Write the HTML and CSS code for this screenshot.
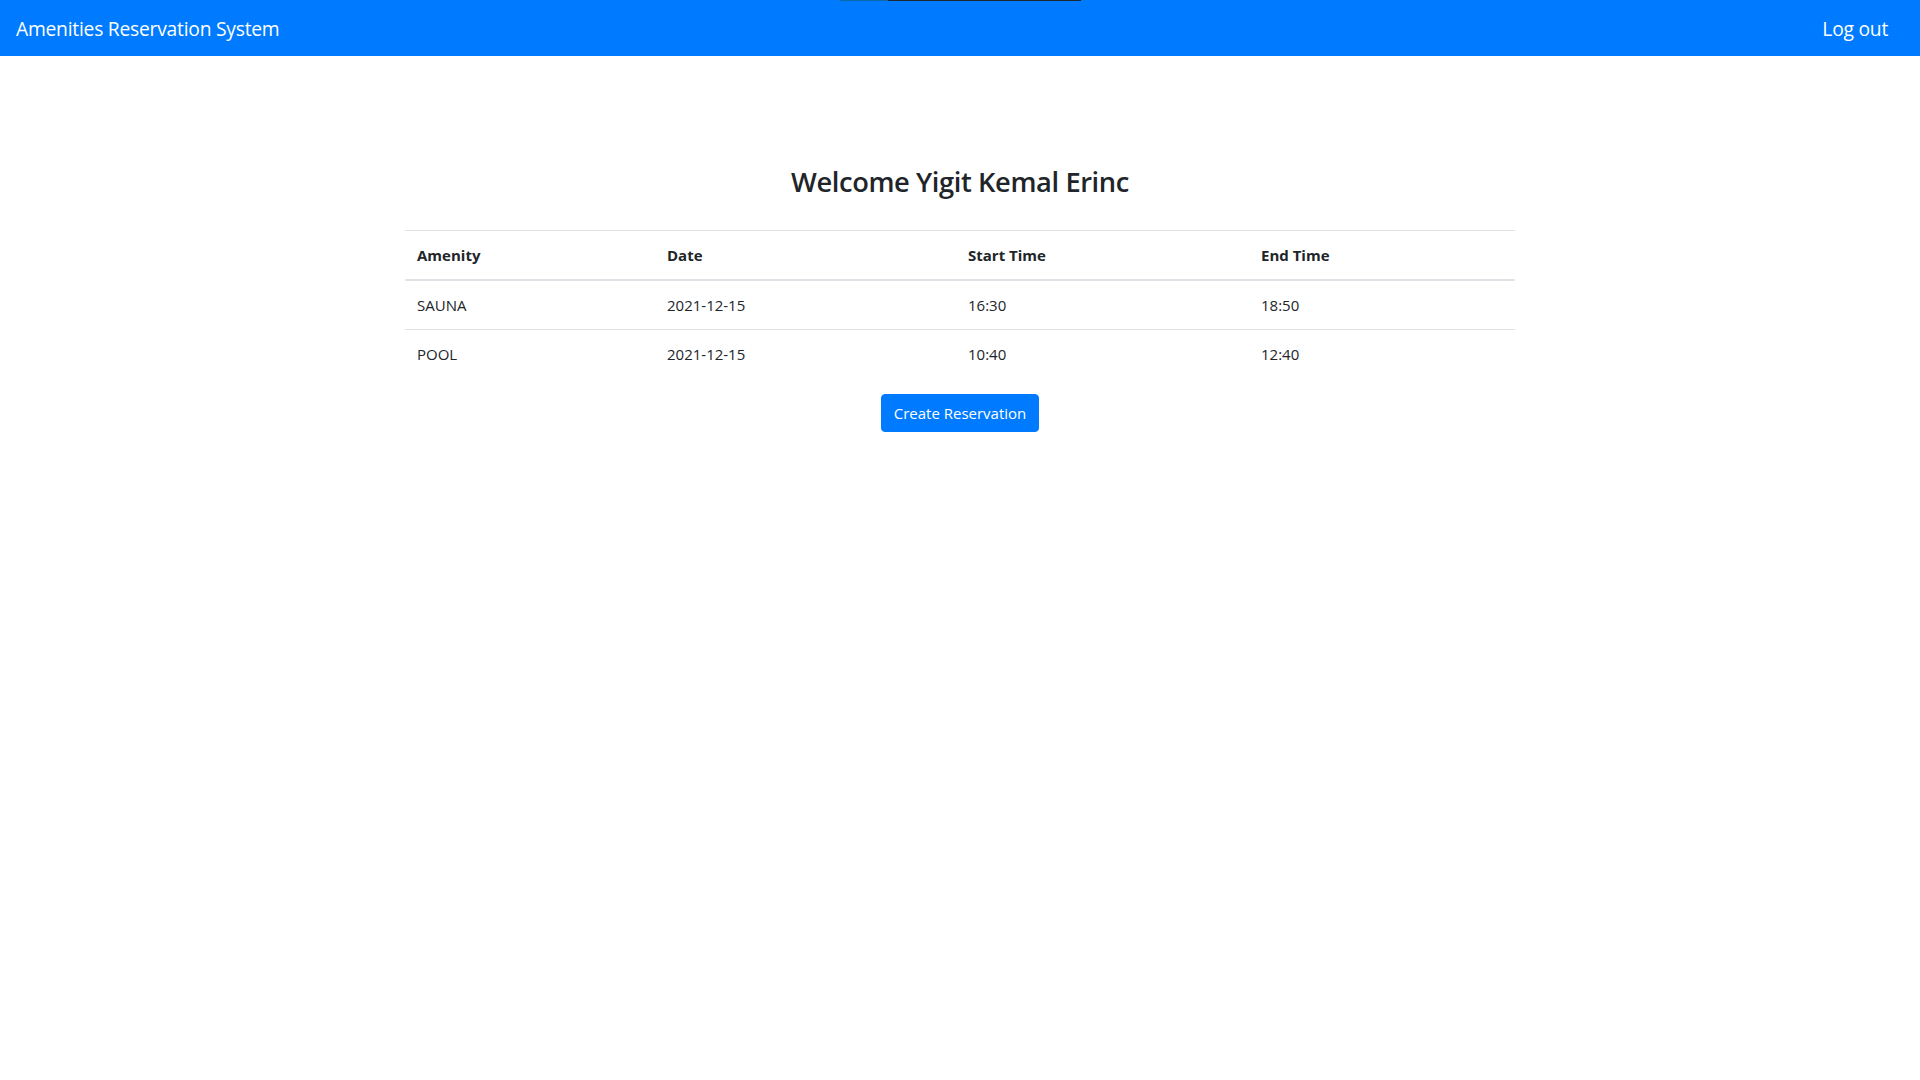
FILE: index.html
```html
<!DOCTYPE html>
<html lang="en">
<head>
<meta charset="utf-8">
<title>Amenities Reservation System</title>
<link rel="stylesheet" href="styles.css">
</head>
<body>
<div class="topline"><span class="seg-a"></span><span class="seg-b"></span></div>
<nav class="navbar">
  <a class="brand" href="#">Amenities Reservation System</a>
  <a class="logout" href="#">Log out</a>
</nav>
<main class="container">
  <h2 class="title">Welcome Yigit Kemal Erinc</h2>
  <table class="table">
    <colgroup>
      <col class="c1"><col class="c2"><col class="c3"><col class="c4">
    </colgroup>
    <thead>
      <tr><th>Amenity</th><th>Date</th><th>Start Time</th><th>End Time</th></tr>
    </thead>
    <tbody>
      <tr><td>SAUNA</td><td>2021-12-15</td><td>16:30</td><td>18:50</td></tr>
      <tr><td>POOL</td><td>2021-12-15</td><td>10:40</td><td>12:40</td></tr>
    </tbody>
  </table>
  <div class="actions">
    <button class="btn" type="button">Create Reservation</button>
  </div>
</main>
</body>
</html>
```
FILE: styles.css
```css
* { box-sizing: border-box; }
html, body { margin: 0; padding: 0; }
body {
  font-family: "Open Sans", "Noto Sans", "Liberation Sans", sans-serif;
  font-size: 16px;
  line-height: 1.5;
  color: #212529;
  background: #fff;
}
.topline {
  position: absolute;
  top: 0;
  left: 840px;
  height: 1px;
  display: flex;
  z-index: 5;
}
.seg-a { width: 48px; height: 1px; background: #0b6aa6; }
.seg-b { width: 193px; height: 1px; background: #1f2933; }

.navbar {
  display: flex;
  align-items: center;
  justify-content: space-between;
  height: 56px;
  padding: 2px 32px 0 16px;
  background: #007bff;
}
.brand, .logout {
  color: #fff;
  text-decoration: none;
  font-size: 19.3px;
  line-height: 30px;
  letter-spacing: -0.25px;
}
.container {
  width: 1110px;
  margin: 0 auto;
}
.title {
  margin: 107px 0 29px;
  text-align: center;
  font-size: 27.3px;
  font-weight: 600;
  line-height: 38px;
  letter-spacing: -0.4px;
}
.table {
  width: 100%;
  border-collapse: collapse;
  margin-bottom: 16px;
  font-size: 15px;
}
.c1 { width: 250px; }
.c2 { width: 301px; }
.c3 { width: 293px; }
.c4 { width: 266px; }
.table th, .table td {
  padding: 12px;
  text-align: left;
  vertical-align: top;
  border-top: 1px solid #dee2e6;
  line-height: 24px;
}
.table th { font-weight: 700; }
.table thead th { border-bottom: 2px solid #dee2e6; }
.actions { display: flex; justify-content: center; }
.btn {
  font-family: inherit;
  font-size: 15px;
  line-height: 24px;
  padding: 6px 0;
  width: 158px;
  white-space: nowrap;
  color: #fff;
  background: #007bff;
  border: 1px solid #007bff;
  border-radius: 4px;
  cursor: pointer;
}
```
